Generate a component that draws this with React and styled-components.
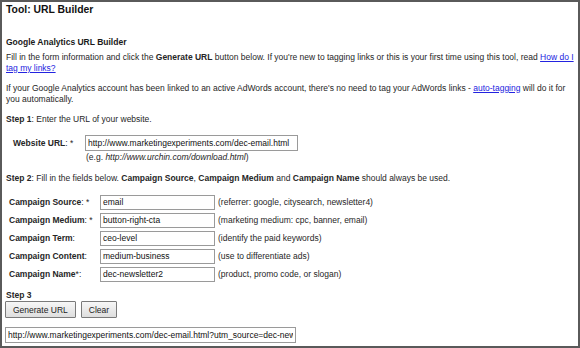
import React from "react";
import styled, { createGlobalStyle } from "styled-components";

const GlobalStyle = createGlobalStyle`
  html, body {
    margin: 0;
    padding: 0;
    background: #fff;
  }
  body {
    font-family: Arial, "Liberation Sans", sans-serif;
    font-size: 8.5px;
    color: #262626;
  }
`;

const Frame = styled.div`
  box-sizing: border-box;
  width: 580px;
  height: 348px;
  border: 2px solid #5a5a5a;
  padding: 2px 2px 0 3px;
  overflow: hidden;
`;

const Title = styled.h1`
  margin: 0 0 0 1px;
  font-size: 10.4px;
  font-weight: bold;
  color: #111;
  line-height: 12px;
`;

const Heading = styled.h2`
  margin: 20.5px 0 0 1px;
  font-size: 8.5px;
  font-weight: bold;
  line-height: 11px;
  color: #1a1a1a;
`;

const Para = styled.p`
  margin: ${p => p.top}px 0 0 1px;
  line-height: 11px;
`;

const Link = styled.a`
  color: #2323e0;
  text-decoration: underline;
`;

const Row = styled.div`
  display: flex;
  align-items: center;
  height: ${p => p.h || 18}px;
  margin-top: ${p => p.top || 0}px;
`;

const Label = styled.div`
  width: ${p => p.w}px;
  padding-left: ${p => p.pl}px;
  box-sizing: border-box;
  flex: none;
  white-space: nowrap;
`;

const Input = styled.input`
  box-sizing: border-box;
  width: ${p => p.w}px;
  height: ${p => p.h || 15}px;
  border: 1px solid #9a9a9a;
  padding: 0 2px;
  font-family: Arial, "Liberation Sans", sans-serif;
  font-size: 8.5px;
  color: #111;
  background: #fff;
  flex: none;
  outline: none;
`;

const Hint = styled.span`
  margin-left: 3px;
  white-space: nowrap;
`;

const Example = styled.div`
  margin: 0.5px 0 0 81px;
  line-height: 11px;
`;

const Fields = styled.div`
  margin-top: 9px;
`;

const StepHead = styled.div`
  margin: 7px 0 0 1px;
  font-weight: bold;
  line-height: 11px;
`;

const Buttons = styled.div`
  display: flex;
  gap: 5px;
  margin: 0 0 0 0;
`;

const Button = styled.button`
  box-sizing: border-box;
  height: 17px;
  padding: 0 7px;
  border: 1px solid #7a7a7a;
  border-radius: 1px;
  background: linear-gradient(#f7f7f7, #dedede);
  font-family: Arial, "Liberation Sans", sans-serif;
  font-size: 8.5px;
  color: #222;
  line-height: 14px;
`;

const fields = [
  { label: "Campaign Source", req: ": *", value: "email", hint: "(referrer: google, citysearch, newsletter4)" },
  { label: "Campaign Medium", req: ": *", value: "button-right-cta", hint: "(marketing medium: cpc, banner, email)" },
  { label: "Campaign Term", req: ":", value: "ceo-level", hint: "(identify the paid keywords)" },
  { label: "Campaign Content", req: ":", value: "medium-business", hint: "(use to differentiate ads)" },
  { label: "Campaign Name", req: "*:", value: "dec-newsletter2", hint: "(product, promo code, or slogan)" },
];

export default function App() {
  return (
    <Frame>
      <GlobalStyle />
      <Title>Tool: URL Builder</Title>
      <Heading>Google Analytics URL Builder</Heading>
      <Para top={4}>
        Fill in the form information and click the <b>Generate URL</b> button below. If you're new to tagging links or this is your first time using this tool, read <Link href="#">How do I tag my links?</Link>
      </Para>
      <Para top={9}>
        If your Google Analytics account has been linked to an active AdWords account, there's no need to tag your AdWords links - <Link href="#">auto-tagging</Link> will do it for you automatically.
      </Para>
      <Para top={9}>
        <b>Step 1</b>: Enter the URL of your website.
      </Para>
      <Row top={9} h={18}>
        <Label w={80} pl={8}><b>Website URL</b>: *</Label>
        <Input w={213} h={16} defaultValue="http://www.marketingexperiments.com/dec-email.html" readOnly />
      </Row>
      <Example>
        (e.g. <i>http://www.urchin.com/download.html</i>)
      </Example>
      <Para top={10}>
        <b>Step 2</b>: Fill in the fields below. <b>Campaign Source</b>, <b>Campaign Medium</b> and <b>Campaign Name</b> should always be used.
      </Para>
      <Fields>
        {fields.map(f => (
          <Row key={f.label} h={18}>
            <Label w={95} pl={4}><b>{f.label}</b>{f.req}</Label>
            <Input w={115} defaultValue={f.value} readOnly />
            <Hint>{f.hint}</Hint>
          </Row>
        ))}
      </Fields>
      <StepHead>Step 3</StepHead>
      <Buttons>
        <Button>Generate URL</Button>
        <Button>Clear</Button>
      </Buttons>
      <Row top={8} h={17}>
        <Input w={291} h={16} defaultValue="http://www.marketingexperiments.com/dec-email.html?utm_source=dec-newsletter2" readOnly />
      </Row>
    </Frame>
  );
}
